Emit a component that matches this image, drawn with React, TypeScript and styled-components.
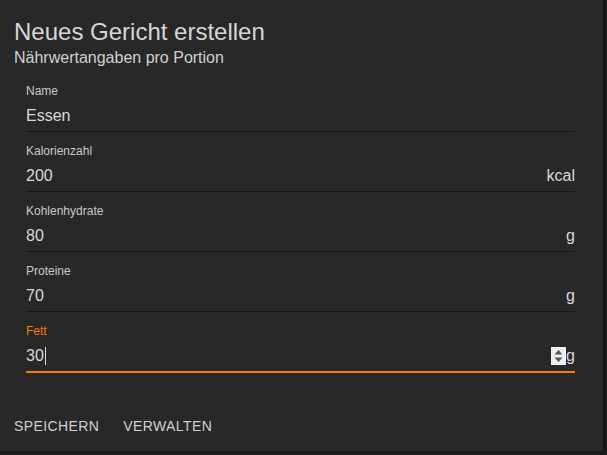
import React from 'react';
import styled, { createGlobalStyle } from 'styled-components';

type FieldDef = {
  label: string;
  value: string;
  unit?: string;
  focused?: boolean;
};

const fields: FieldDef[] = [
  { label: 'Name', value: 'Essen' },
  { label: 'Kalorienzahl', value: '200', unit: 'kcal' },
  { label: 'Kohlenhydrate', value: '80', unit: 'g' },
  { label: 'Proteine', value: '70', unit: 'g' },
  { label: 'Fett', value: '30', unit: 'g', focused: true },
];

const App = () => {
  return (
    <>
      <GlobalStyle />
      <Card>
        <Header>
          <Title>Neues Gericht erstellen</Title>
          <Subtitle>Nährwertangaben pro Portion</Subtitle>
        </Header>

        <Form>
          {fields.map((f) => (
            <Field key={f.label}>
              <Label focused={f.focused}>{f.label}</Label>
              <InputRow focused={f.focused}>
                {f.focused ? (
                  <ActiveValue>
                    {f.value}
                    <Caret />
                  </ActiveValue>
                ) : (
                  <Input
                    type={f.label === 'Name' ? 'text' : 'number'}
                    defaultValue={f.value}
                  />
                )}
                {f.focused && (
                  <Spinner>
                    <svg width="9" height="14" viewBox="0 0 9 14">
                      <path d="M4.5 1 L8.5 5.5 L0.5 5.5 Z" fill="#555" />
                      <path d="M4.5 13 L8.5 8.5 L0.5 8.5 Z" fill="#555" />
                    </svg>
                  </Spinner>
                )}
                {f.unit && <Unit>{f.unit}</Unit>}
              </InputRow>
            </Field>
          ))}
        </Form>

        <Actions>
          <TextButton>Speichern</TextButton>
          <TextButton>Verwalten</TextButton>
        </Actions>
      </Card>
    </>
  );
};

export default App;

const GlobalStyle = createGlobalStyle`
  html, body {
    margin: 0;
    padding: 0;
    background: #1b1b1b;
    font-family: Arial, "Liberation Sans", Helvetica, sans-serif;
  }
  * { box-sizing: border-box; }
  input[type=number]::-webkit-inner-spin-button,
  input[type=number]::-webkit-outer-spin-button {
    -webkit-appearance: none;
    margin: 0;
  }
`;

const Card = styled.div`
  width: 603px;
  height: 451px;
  background: #282828;
  box-shadow: 0 0 4px rgba(0, 0, 0, 0.6);
  padding: 17px 14px 0 14px;
  display: flex;
  flex-direction: column;
`;

const Header = styled.div`
  display: flex;
  flex-direction: column;
`;

const Title = styled.h2`
  margin: 0;
  font-size: 24px;
  font-weight: 400;
  line-height: 29px;
  color: #d6d6d6;
`;

const Subtitle = styled.div`
  font-size: 16px;
  line-height: 24px;
  color: #d0d0d0;
`;

const Form = styled.div`
  display: flex;
  flex-direction: column;
  gap: 12px;
  margin-top: 14px;
  padding: 0 14px 0 12px;
`;

const Field = styled.div`
  display: flex;
  flex-direction: column;
  gap: 5px;
`;

const Label = styled.label<{ focused?: boolean }>`
  font-size: 12px;
  line-height: 14px;
  color: ${(p) => (p.focused ? '#f77b05' : '#c8c8c8')};
`;

const InputRow = styled.div<{ focused?: boolean }>`
  display: flex;
  align-items: flex-start;
  padding-top: 1px;
  height: ${(p) => (p.focused ? '30px' : '29px')};
  border-bottom: ${(p) => (p.focused ? '2px solid #f77b05' : '1px solid #151515')};
`;

const Input = styled.input`
  flex: 1;
  min-width: 0;
  border: none;
  outline: none;
  background: transparent;
  padding: 0;
  margin: 0;
  height: 24px;
  font-family: inherit;
  font-size: 16px;
  line-height: 24px;
  color: #d8d8d8;
  -moz-appearance: textfield;
`;

const ActiveValue = styled.div`
  flex: 1;
  display: flex;
  align-items: center;
  height: 24px;
  font-size: 16px;
  line-height: 24px;
  color: #d8d8d8;
`;

const Caret = styled.span`
  width: 1px;
  height: 18px;
  margin-left: 1px;
  background: #d8d8d8;
`;

const Spinner = styled.div`
  width: 15px;
  height: 18px;
  margin-top: 3px;
  background: #efefef;
  display: flex;
  align-items: center;
  justify-content: center;
`;

const Unit = styled.span`
  font-size: 16px;
  line-height: 24px;
  color: #d8d8d8;
`;

const Actions = styled.div`
  display: flex;
  gap: 8px;
  margin-top: 27px;
  padding: 8px 0 8px 0;
  margin-left: -8px;
`;

const TextButton = styled.button`
  border: none;
  background: transparent;
  padding: 6px 8px;
  font-family: inherit;
  font-size: 14px;
  line-height: 24.5px;
  letter-spacing: 0.4px;
  text-transform: uppercase;
  color: #d0d0d0;
  cursor: pointer;
`;
